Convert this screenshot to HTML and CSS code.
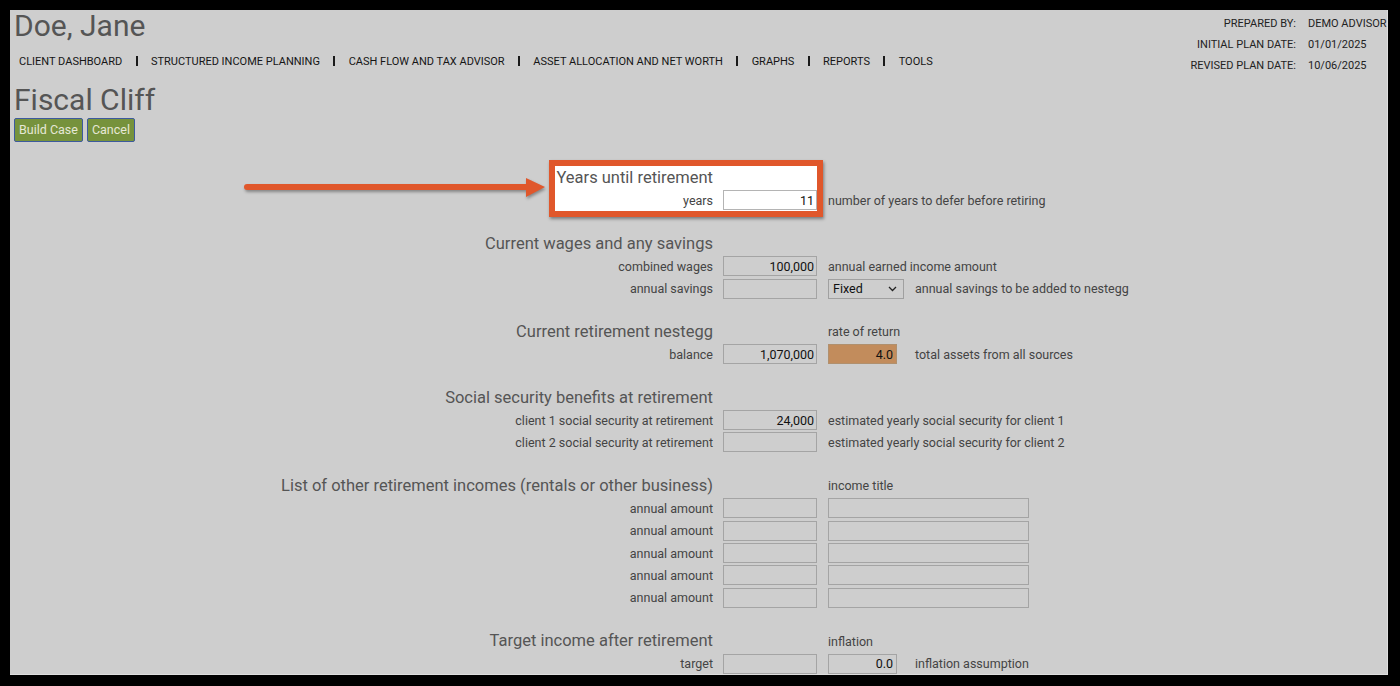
FILE: index.html
```html
<!DOCTYPE html>
<html lang="en">
<head>
<meta charset="utf-8">
<title>Fiscal Cliff</title>
<link rel="stylesheet" href="styles.css">
</head>
<body>
<div class="frame">
  <div class="panel">
    <header class="top">
      <div class="top-left">
        <h1 class="client">Doe, Jane</h1>
        <ul class="nav">
          <li>CLIENT DASHBOARD</li>
          <li>STRUCTURED INCOME PLANNING</li>
          <li>CASH FLOW AND TAX ADVISOR</li>
          <li>ASSET ALLOCATION AND NET WORTH</li>
          <li>GRAPHS</li>
          <li>REPORTS</li>
          <li>TOOLS</li>
        </ul>
      </div>
      <dl class="plan-info">
        <dt>PREPARED BY:</dt><dd>DEMO ADVISOR</dd>
        <dt>INITIAL PLAN DATE:</dt><dd>01/01/2025</dd>
        <dt>REVISED PLAN DATE:</dt><dd>10/06/2025</dd>
      </dl>
    </header>

    <h2 class="page-title">Fiscal Cliff</h2>
    <div class="actions">
      <button class="btn" type="button">Build Case</button>
      <button class="btn" type="button">Cancel</button>
    </div>

    <form class="form">
      <section class="sec sec-hl">
        <div class="hl-box"></div>
        <svg class="arrow" width="308" height="26" viewBox="0 0 308 26">
          <line x1="3" y1="12" x2="286" y2="12" stroke="#e0572b" stroke-width="6" stroke-linecap="round"/>
          <polygon points="282,3 301,12 282,22" fill="#e0572b"/>
        </svg>
        <h3 class="sec-title">Years until retirement</h3>
        <div class="lbl">years</div>
        <input class="inp inp-white" type="text" value="11">
        <div class="c3">number of years to defer before retiring</div>
      </section>

      <section class="sec">
        <h3 class="sec-title">Current wages and any savings</h3>
        <div class="lbl">combined wages</div>
        <input class="inp" type="text" value="100,000">
        <div class="c3">annual earned income amount</div>
        <div class="lbl">annual savings</div>
        <input class="inp" type="text" value="">
        <div class="c3">
          <span class="lead">
            <span class="sel-wrap">
              <select class="sel"><option>Fixed</option></select>
              <svg class="chev" width="9" height="6" viewBox="0 0 9 6"><polyline points="1,1 4.5,4.5 8,1" fill="none" stroke="#222" stroke-width="1.3"/></svg>
            </span>
          </span>
          <span>annual savings to be added to nestegg</span>
        </div>
      </section>

      <section class="sec">
        <h3 class="sec-title">Current retirement nestegg</h3>
        <div class="c3">rate of return</div>
        <div class="lbl">balance</div>
        <input class="inp" type="text" value="1,070,000">
        <div class="c3">
          <span class="lead"><input class="inp inp-short inp-rate" type="text" value="4.0"></span>
          <span>total assets from all sources</span>
        </div>
      </section>

      <section class="sec">
        <h3 class="sec-title">Social security benefits at retirement</h3>
        <div class="lbl">client 1 social security at retirement</div>
        <input class="inp" type="text" value="24,000">
        <div class="c3">estimated yearly social security for client 1</div>
        <div class="lbl">client 2 social security at retirement</div>
        <input class="inp" type="text" value="">
        <div class="c3">estimated yearly social security for client 2</div>
      </section>

      <section class="sec">
        <h3 class="sec-title">List of other retirement incomes (rentals or other business)</h3>
        <div class="c3">income title</div>
        <div class="lbl">annual amount</div>
        <input class="inp" type="text" value="">
        <div class="c3"><input class="inp inp-wide" type="text" value=""></div>
        <div class="lbl">annual amount</div>
        <input class="inp" type="text" value="">
        <div class="c3"><input class="inp inp-wide" type="text" value=""></div>
        <div class="lbl">annual amount</div>
        <input class="inp" type="text" value="">
        <div class="c3"><input class="inp inp-wide" type="text" value=""></div>
        <div class="lbl">annual amount</div>
        <input class="inp" type="text" value="">
        <div class="c3"><input class="inp inp-wide" type="text" value=""></div>
        <div class="lbl">annual amount</div>
        <input class="inp" type="text" value="">
        <div class="c3"><input class="inp inp-wide" type="text" value=""></div>
      </section>

      <section class="sec">
        <h3 class="sec-title">Target income after retirement</h3>
        <div class="c3">inflation</div>
        <div class="lbl">target</div>
        <input class="inp" type="text" value="">
        <div class="c3">
          <span class="lead"><input class="inp inp-short" type="text" value="0.0"></span>
          <span>inflation assumption</span>
        </div>
      </section>
    </form>
  </div>
</div>
</body>
</html>
```

FILE: styles.css
```css
* { box-sizing: border-box; }

html, body {
  margin: 0;
  background: #000;
}

body {
  font-family: Roboto, "Liberation Sans", Arial, sans-serif;
}

.frame {
  width: 1400px;
  height: 686px;
  padding: 10px 12px 11px 10px;
}

.panel {
  height: 665px;
  background: #cecece;
  padding: 0 0 0 2px;
  border-right: 1px solid #dedede;
  border-bottom: 1px solid #dedede;
}

/* header */
.top {
  display: flex;
  justify-content: space-between;
  align-items: flex-start;
}

.client {
  margin: -2.3px 0 0 2px;
  font-size: 30px;
  line-height: 36px;
  font-weight: 400;
  color: #555;
}

.nav {
  list-style: none;
  margin: 6.3px 0 0 7px;
  padding: 0;
  display: flex;
  font-size: 11px;
  line-height: 24px;
  color: #151515;
  white-space: nowrap;
}

.nav li + li::before {
  content: "";
  display: inline-block;
  width: 2px;
  height: 10px;
  background: #1a1a1a;
  margin: 0 13.3px 0 13.4px;
  vertical-align: -1px;
}

.plan-info {
  margin: 3px 0 0 0;
  display: grid;
  grid-template-columns: auto 79px;
  column-gap: 12px;
  font-size: 11px;
  line-height: 21px;
  color: #222;
}

.plan-info dt { text-align: right; }
.plan-info dd { margin: 0; white-space: nowrap; }

.page-title {
  margin: 5.7px 0 0 2px;
  font-size: 30px;
  line-height: 36px;
  font-weight: 400;
  color: #555;
}

.actions {
  margin: 0.3px 0 0 2px;
  display: flex;
  gap: 4px;
}

.btn {
  height: 24px;
  padding: 0 4px;
  font-family: Roboto, "Liberation Sans", Arial, sans-serif;
  font-size: 12.5px;
  color: #e6e8d6;
  background: #76923c;
  border: 1px solid #3d5a9e;
  border-radius: 2px;
}

/* form */
.form {
  margin-top: 24.8px;
}

.sec {
  display: grid;
  grid-template-columns: 701px 94px 1fr;
  column-gap: 10px;
  grid-auto-rows: 22.4px;
  align-items: center;
}

.sec + .sec { margin-top: 21px; }

.sec-hl {
  position: relative;
  z-index: 0;
}

.hl-box {
  position: absolute;
  left: 537px;
  top: -6.8px;
  width: 274px;
  height: 57px;
  border: 6px solid #e0572b;
  background: #fff;
  box-shadow: 1px 2px 3px rgba(0, 0, 0, 0.4);
  z-index: -1;
}

.arrow {
  position: absolute;
  left: 232px;
  top: 8.2px;
  filter: drop-shadow(1px 2px 1.5px rgba(0, 0, 0, 0.35));
}

.sec-title {
  grid-column: 1;
  margin: 0;
  font-size: 16.5px;
  line-height: 22px;
  font-weight: 400;
  color: #555;
  text-align: right;
  white-space: nowrap;
}

.lbl {
  grid-column: 1;
  text-align: right;
  font-size: 12.5px;
  color: #444;
  white-space: nowrap;
}

.c3 {
  grid-column: 3;
  padding-left: 1px;
  display: flex;
  align-items: center;
  font-size: 12.5px;
  color: #444;
  white-space: nowrap;
}

.lead {
  width: 87px;
  flex: none;
  display: flex;
  align-items: center;
}

.inp {
  grid-column: 2;
  width: 94px;
  height: 20px;
  margin: 0;
  padding: 0 2px;
  font-family: Roboto, "Liberation Sans", Arial, sans-serif;
  font-size: 12.5px;
  color: #111;
  text-align: right;
  background: #cecece;
  border: 1px solid #a4a4a4;
  border-radius: 0;
  outline: none;
}

.inp-white {
  background: #fff;
  border-color: #b4b4b4;
}

.inp-short {
  width: 69px;
  padding-right: 3px;
}

.inp-rate {
  background: #c28c5c;
  border-color: #b0906e;
}

.inp-wide {
  width: 201px;
}

.sel-wrap {
  position: relative;
  display: inline-block;
  width: 76px;
  height: 20px;
}

.sel {
  appearance: none;
  -webkit-appearance: none;
  width: 76px;
  height: 20px;
  margin: 0;
  padding: 0 0 0 4px;
  font-family: Roboto, "Liberation Sans", Arial, sans-serif;
  font-size: 12.5px;
  color: #111;
  background: #cecece;
  border: 1px solid #a0a0a0;
  border-radius: 0;
}

.chev {
  position: absolute;
  right: 7px;
  top: 7px;
  pointer-events: none;
}
```
